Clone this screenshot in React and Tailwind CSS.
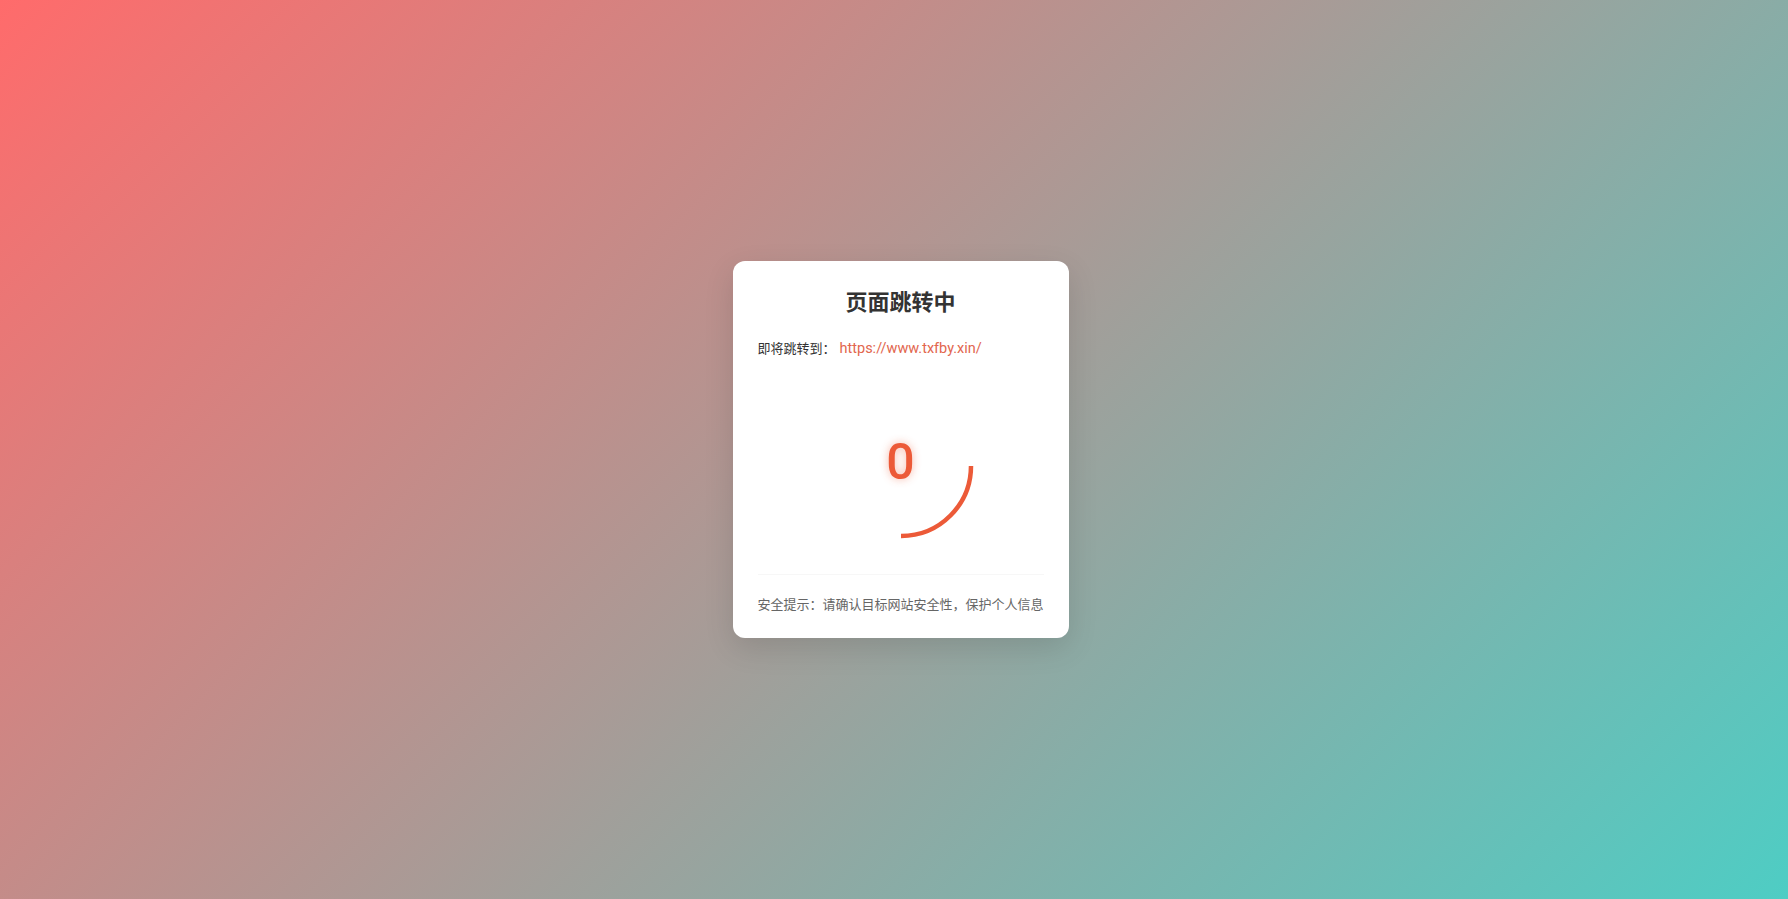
import React from "react";

const font = "font-['Roboto','Noto_Sans_CJK_SC',sans-serif]";

export default function App() {
  return (
    <div className={`w-full h-screen flex items-center justify-center pl-[13px] bg-[linear-gradient(135deg,#ff6b6b,#4ecdc4)] ${font}`}>
      <div className="w-[336px] bg-white rounded-xl px-[25px] pt-[27px] pb-[24px] shadow-[0_10px_30px_rgba(0,0,0,0.12)]">
        {/* Title */}
        <h1 className="text-center text-[22px] leading-[1.4] font-bold text-[#333] mb-[19px]">页面跳转中</h1>

        {/* Target */}
        <div className="flex items-center leading-[21px]">
          <span className="text-[13px] text-[#333]">即将跳转到：</span>
          <span className="text-[14.5px] text-[#e2664e] ml-[4px]">https://www.txfby.xin/</span>
        </div>

        {/* Countdown */}
        <div className="relative mx-auto mt-[32px] mb-[33px] w-[150px] h-[150px]">
          <svg width="150" height="150" viewBox="0 0 150 150" className="absolute inset-0">
            <path d="M 145 75 A 70 70 0 0 1 75 145" fill="none" stroke="#ec5a38" strokeWidth="4.5" />
          </svg>
          <div className="absolute inset-0 flex items-center justify-center pb-[8px]">
            <span className="text-[50px] leading-none font-medium text-[#ec5a38] [text-shadow:0_0_8px_rgba(236,90,56,0.45)]">0</span>
          </div>
        </div>

        {/* Footer */}
        <div className="border-t border-[#f7f7f7] pt-[20px]">
          <p className="text-[13px] leading-[1.5] text-[#666] whitespace-nowrap">安全提示：请确认目标网站安全性，保护个人信息</p>
        </div>
      </div>
    </div>
  );
}
